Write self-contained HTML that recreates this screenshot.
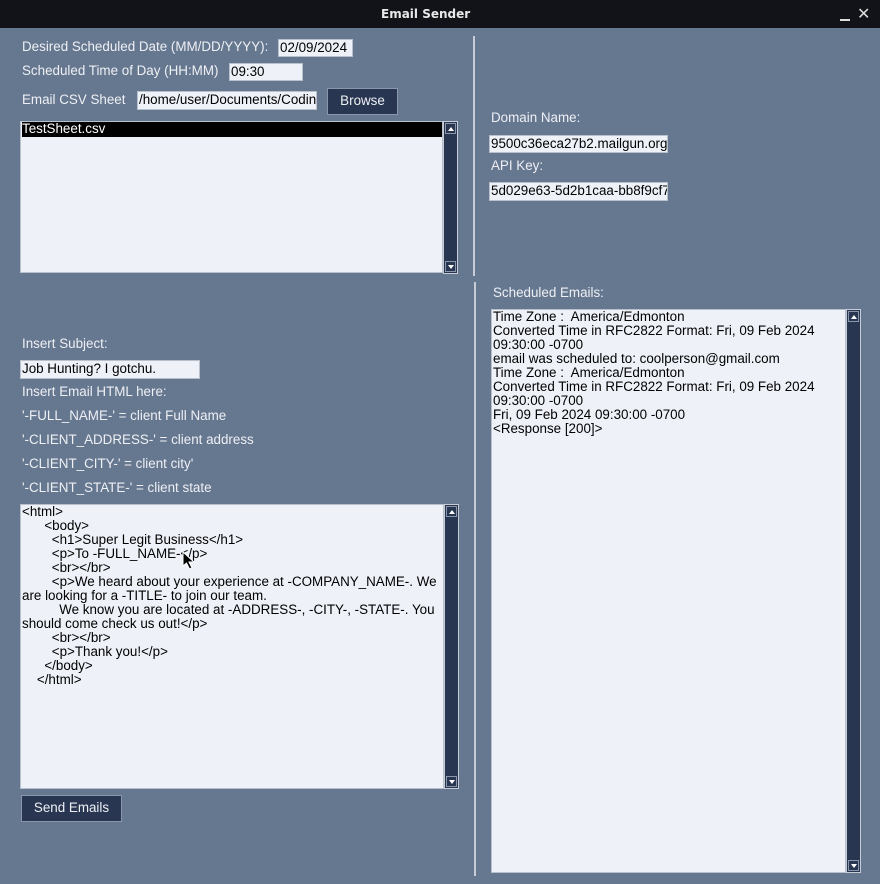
<!DOCTYPE html>
<html><head><style>
*{margin:0;padding:0;box-sizing:border-box}
body{width:880px;height:884px;background:#667790;font-family:"Liberation Sans",sans-serif;font-size:13.4px;color:#eef0f4;position:relative;overflow:hidden}
.a{position:absolute}
.lbl{position:absolute;white-space:nowrap;line-height:16px}
.in{position:absolute;background:#eef2f8;border:1px solid #b8c0cc;color:#000;white-space:nowrap;overflow:hidden;line-height:15px;padding-left:1px}
.btn{position:absolute;background:#283652;border:1px solid #8a96aa;color:#eef0f4;text-align:center}
.sb{position:absolute;background:#283652;border:1px solid #c8ccd4}
.sb .u,.sb .d{position:absolute;left:1px;width:11px;height:11px;border:1px solid #8a96aa;background:#283652}
.sb .u{top:1px}.sb .d{bottom:1px}
.sb .u:after{content:"";position:absolute;left:2px;top:3px;border-left:3px solid transparent;border-right:3px solid transparent;border-bottom:4px solid #fff}
.sb .d:after{content:"";position:absolute;left:2px;top:3px;border-left:3px solid transparent;border-right:3px solid transparent;border-top:4px solid #fff}
.txt{position:absolute;background:#eef2f8;border:1px solid #b8c0cc;color:#000;line-height:14px;white-space:pre-wrap;padding-left:1px;overflow:hidden}
</style></head><body>
<div class="a" style="left:0;top:0;width:880px;height:28px;background:#121318"></div>
<div class="a" style="left:381px;top:7px;color:#e8e8e8;font-weight:bold;font-family:'DejaVu Sans',sans-serif;font-size:12px">Email Sender</div>
<div class="a" style="left:840px;top:19px;width:10px;height:2px;background:#ddd"></div>
<div class="a" style="left:857px;top:4px;color:#ddd;font-size:16px;font-family:'DejaVu Sans',sans-serif">✕</div>

<div class="a" style="left:473px;top:36px;width:2px;height:240px;background:#c8ccd4"></div>
<div class="a" style="left:474px;top:282px;width:2px;height:594px;background:#c8ccd4"></div>

<div class="lbl" style="left:22px;top:39px">Desired Scheduled Date (MM/DD/YYYY):</div>
<div class="in" style="left:278px;top:39px;width:75px;height:18px">02/09/2024</div>
<div class="lbl" style="left:22px;top:63px">Scheduled Time of Day (HH:MM)</div>
<div class="in" style="left:229px;top:63px;width:74px;height:18px">09:30</div>
<div class="lbl" style="left:22px;top:92px">Email CSV Sheet</div>
<div class="in" style="left:137px;top:91px;width:180px;height:19px">/home/user/Documents/Coding</div>
<div class="btn" style="left:327px;top:88px;width:71px;height:27px;line-height:24px">Browse</div>

<div class="txt" style="left:20px;top:121px;width:423px;height:152px"><div style="background:#000;color:#fff;height:15px">TestSheet.csv</div></div>
<div class="sb" style="left:443px;top:121px;width:15px;height:153px"><div class="u"></div><div class="d"></div></div>

<div class="lbl" style="left:491px;top:110px">Domain Name:</div>
<div class="in" style="left:489px;top:135px;width:179px;height:18px">9500c36eca27b2.mailgun.org</div>
<div class="lbl" style="left:491px;top:158px">API Key:</div>
<div class="in" style="left:489px;top:182px;width:179px;height:19px">5d029e63-5d2b1caa-bb8f9cf7<span style="display:inline-block;width:2px;height:14px;background:#000;vertical-align:-2px"></span></div>

<div class="lbl" style="left:493px;top:285px">Scheduled Emails:</div>
<div class="txt" style="left:491px;top:309px;width:355px;height:564px">Time Zone :  America/Edmonton
Converted Time in RFC2822 Format: Fri, 09 Feb 2024 09:30:00 -0700
email was scheduled to: coolperson@gmail.com
Time Zone :  America/Edmonton
Converted Time in RFC2822 Format: Fri, 09 Feb 2024 09:30:00 -0700
Fri, 09 Feb 2024 09:30:00 -0700
&lt;Response [200]&gt;</div>
<div class="sb" style="left:846px;top:309px;width:15px;height:564px"><div class="u"></div><div class="d"></div></div>

<div class="lbl" style="left:22px;top:336px">Insert Subject:</div>
<div class="in" style="left:20px;top:360px;width:180px;height:19px">Job Hunting? I gotchu.</div>
<div class="lbl" style="left:22px;top:384px">Insert Email HTML here:</div>
<div class="lbl" style="left:22px;top:408px">'-FULL_NAME-' = client Full Name</div>
<div class="lbl" style="left:22px;top:432px">'-CLIENT_ADDRESS-' = client address</div>
<div class="lbl" style="left:22px;top:456px">'-CLIENT_CITY-' = client city'</div>
<div class="lbl" style="left:22px;top:480px">'-CLIENT_STATE-' = client state</div>

<div class="txt" style="left:20px;top:504px;width:424px;height:285px">&lt;html&gt;
      &lt;body&gt;
        &lt;h1&gt;Super Legit Business&lt;/h1&gt;
        &lt;p&gt;To -FULL_NAME-&lt;/p&gt;
        &lt;br&gt;&lt;/br&gt;
        &lt;p&gt;We heard about your experience at -COMPANY_NAME-. We are looking for a -TITLE- to join our team.
          We know you are located at -ADDRESS-, -CITY-, -STATE-. You should come check us out!&lt;/p&gt;
        &lt;br&gt;&lt;/br&gt;
        &lt;p&gt;Thank you!&lt;/p&gt;
      &lt;/body&gt;
    &lt;/html&gt;</div>
<div class="sb" style="left:444px;top:504px;width:15px;height:285px"><div class="u"></div><div class="d"></div></div>
<svg class="a" style="left:182px;top:551px" width="14" height="19" viewBox="0 0 14 19"><path d="M1 1 L1 15 L4.5 12 L7.5 18 L10 17 L7 11 L12 11 Z" fill="#000" stroke="#fff" stroke-width="1"/></svg>

<div class="btn" style="left:21px;top:795px;width:101px;height:27px;line-height:24px">Send Emails</div>
</body></html>
